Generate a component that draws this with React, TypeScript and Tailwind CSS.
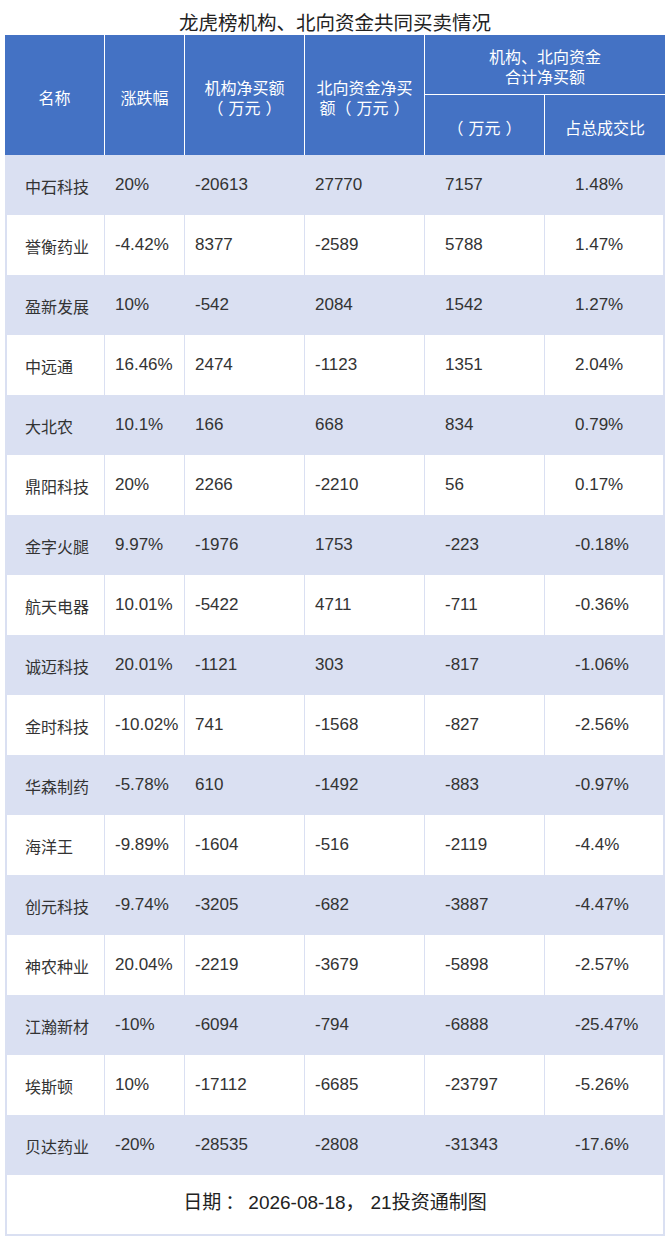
const rows: string[][] = [
  ["中石科技", "20%", "-20613", "27770", "7157", "1.48%"],
  ["誉衡药业", "-4.42%", "8377", "-2589", "5788", "1.47%"],
  ["盈新发展", "10%", "-542", "2084", "1542", "1.27%"],
  ["中远通", "16.46%", "2474", "-1123", "1351", "2.04%"],
  ["大北农", "10.1%", "166", "668", "834", "0.79%"],
  ["鼎阳科技", "20%", "2266", "-2210", "56", "0.17%"],
  ["金字火腿", "9.97%", "-1976", "1753", "-223", "-0.18%"],
  ["航天电器", "10.01%", "-5422", "4711", "-711", "-0.36%"],
  ["诚迈科技", "20.01%", "-1121", "303", "-817", "-1.06%"],
  ["金时科技", "-10.02%", "741", "-1568", "-827", "-2.56%"],
  ["华森制药", "-5.78%", "610", "-1492", "-883", "-0.97%"],
  ["海洋王", "-9.89%", "-1604", "-516", "-2119", "-4.4%"],
  ["创元科技", "-9.74%", "-3205", "-682", "-3887", "-4.47%"],
  ["神农种业", "20.04%", "-2219", "-3679", "-5898", "-2.57%"],
  ["江瀚新材", "-10%", "-6094", "-794", "-6888", "-25.47%"],
  ["埃斯顿", "10%", "-17112", "-6685", "-23797", "-5.26%"],
  ["贝达药业", "-20%", "-28535", "-2808", "-31343", "-17.6%"],
];

// left padding per column, measured from the picture
const pads = ["pl-[18px]", "pl-[10px]", "pl-[10px]", "pl-[10px]", "pl-[20px]", "pl-[30px]"];

const font = {
  fontFamily: '"Liberation Sans", "Noto Sans CJK SC", sans-serif',
};

const cjk = {
  fontFamily: '"Noto Sans CJK SC", sans-serif',
};

// full-width parens with the loose spacing of the original font
const Unit = () => (
  <span className="whitespace-nowrap" style={cjk}>
    <span className="mr-[5px]">（</span>
    万元
    <span className="ml-[5px]">）</span>
  </span>
);

const App = () => {
  return (
    <div className="w-[670px] min-h-[1240px] bg-white px-[5px] text-[#333]" style={font}>
      {/* Title */}
      <div className="h-[35px] pt-[9px] text-center text-[19.5px] leading-[26px] text-[#222]" style={cjk}>
        龙虎榜机构、北向资金共同买卖情况
      </div>

      {/* Header */}
      <div
        className="grid h-[120px] grid-cols-[100px_80px_120px_120px_120px_120px] grid-rows-[60px_60px] bg-[#4472c4] text-center text-[16px] leading-[20px] text-white"
        style={cjk}
      >
        <div className="row-span-2 flex items-center justify-center border-r border-white pt-[4px]">名称</div>
        <div className="row-span-2 flex items-center justify-center border-r border-white pt-[4px]">涨跌幅</div>
        <div className="row-span-2 flex items-center justify-center border-r border-white pt-[4px]">
          <div>
            机构净买额
            <br />
            <Unit />
          </div>
        </div>
        <div className="row-span-2 flex items-center justify-center border-r border-white pt-[4px]">
          <div>
            北向资金净买
            <br />
            额<Unit />
          </div>
        </div>
        <div className="col-span-2 flex items-center justify-center border-b border-white pt-[3px]">
          <div>
            机构、北向资金
            <br />
            合计净买额
          </div>
        </div>
        <div className="flex items-center justify-center border-r border-white pt-[4px]">
          <Unit />
        </div>
        <div className="flex items-center justify-center pt-[4px]">占总成交比</div>
      </div>

      {/* Body */}
      {rows.map((row, i) => (
        <div
          key={i}
          className={`grid h-[60px] grid-cols-[98px_80px_120px_120px_120px_118px] border-x-2 border-[#dae0f2] ${
            i % 2 === 0 ? "bg-[#dae0f2]" : "bg-white"
          }`}
        >
          {row.map((cell, j) => (
            <div
              key={j}
              className={`flex items-center whitespace-nowrap ${pads[j]} ${
                j < 5 ? "border-r border-[#dae0f2]" : ""
              } ${j === 0 ? "pt-[5px] text-[16px]" : "text-[17px]"}`}
            >
              {cell}
            </div>
          ))}
        </div>
      ))}

      {/* Footer */}
      <div className="flex h-[61px] items-center justify-center border-x-2 border-b-2 border-[#dae0f2] pb-[4px] text-[19px] text-[#222]">
        <span>
          日期<span className="mx-[4px]" style={cjk}>：</span>2026-08-18<span className="mr-[6px]" style={cjk}>，</span>21投资通制图
        </span>
      </div>
    </div>
  );
};

export default App;
